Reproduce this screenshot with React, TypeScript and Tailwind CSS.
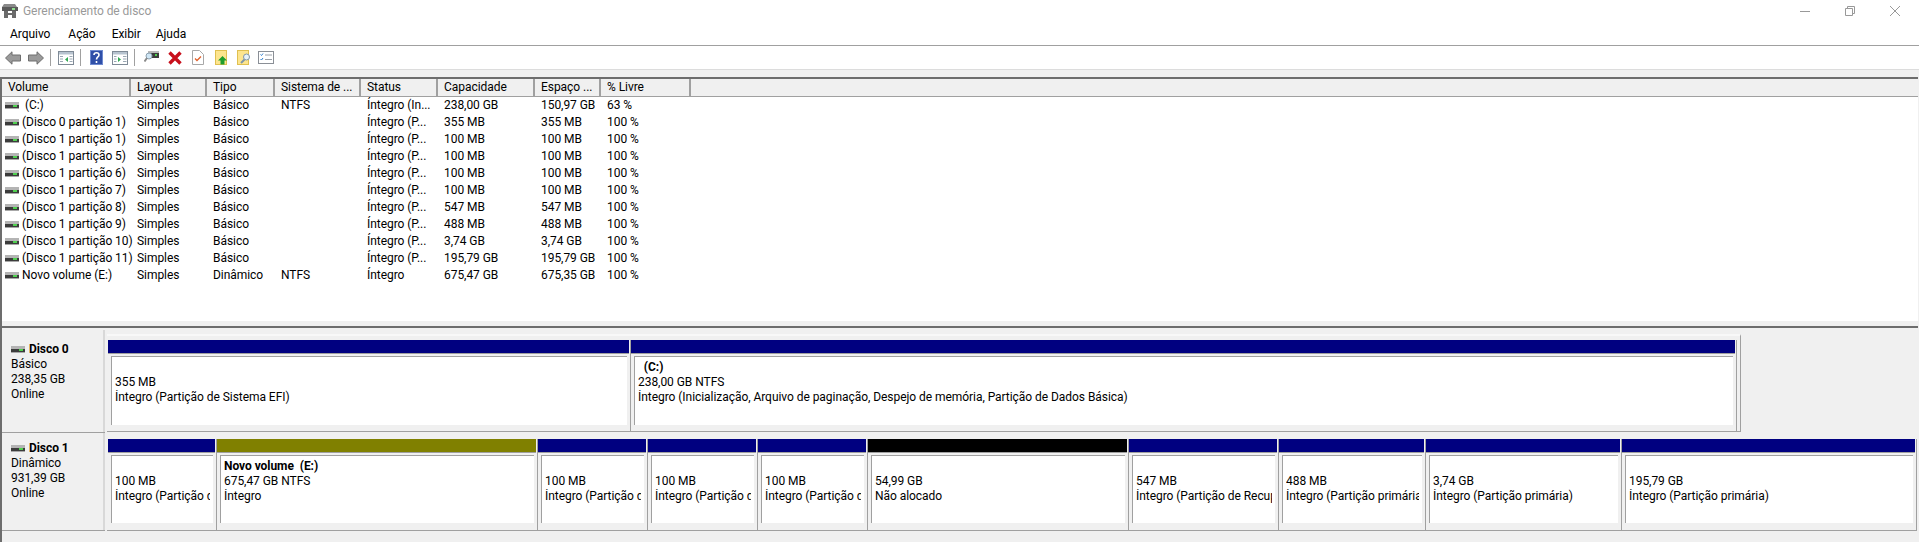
const font = { fontFamily: 'Roboto, "Liberation Sans", sans-serif' };

const columns = [
  { name: 'Volume', w: 'w-[129px]' },
  { name: 'Layout', w: 'w-[76px]' },
  { name: 'Tipo', w: 'w-[68px]' },
  { name: 'Sistema de ...', w: 'w-[86px]' },
  { name: 'Status', w: 'w-[77px]' },
  { name: 'Capacidade', w: 'w-[97px]' },
  { name: 'Espaço ...', w: 'w-[66px]' },
  { name: '% Livre', w: 'w-[90px]' },
];

const rows = [
  [' (C:)', 'Simples', 'Básico', 'NTFS', 'Íntegro (In...', '238,00 GB', '150,97 GB', '63 %'],
  ['(Disco 0 partição 1)', 'Simples', 'Básico', '', 'Íntegro (P...', '355 MB', '355 MB', '100 %'],
  ['(Disco 1 partição 1)', 'Simples', 'Básico', '', 'Íntegro (P...', '100 MB', '100 MB', '100 %'],
  ['(Disco 1 partição 5)', 'Simples', 'Básico', '', 'Íntegro (P...', '100 MB', '100 MB', '100 %'],
  ['(Disco 1 partição 6)', 'Simples', 'Básico', '', 'Íntegro (P...', '100 MB', '100 MB', '100 %'],
  ['(Disco 1 partição 7)', 'Simples', 'Básico', '', 'Íntegro (P...', '100 MB', '100 MB', '100 %'],
  ['(Disco 1 partição 8)', 'Simples', 'Básico', '', 'Íntegro (P...', '547 MB', '547 MB', '100 %'],
  ['(Disco 1 partição 9)', 'Simples', 'Básico', '', 'Íntegro (P...', '488 MB', '488 MB', '100 %'],
  ['(Disco 1 partição 10)', 'Simples', 'Básico', '', 'Íntegro (P...', '3,74 GB', '3,74 GB', '100 %'],
  ['(Disco 1 partição 11)', 'Simples', 'Básico', '', 'Íntegro (P...', '195,79 GB', '195,79 GB', '100 %'],
  ['Novo volume (E:)', 'Simples', 'Dinâmico', 'NTFS', 'Íntegro', '675,47 GB', '675,35 GB', '100 %'],
];

const disk0 = [
  { w: 'w-[523px]', bar: 'bg-[#000080]', size: '355 MB', status: 'Íntegro (Partição de Sistema EFI)' },
  { w: 'w-[1106px]', bar: 'bg-[#000080]', name: '  (C:)', size: '238,00 GB NTFS', status: 'Íntegro (Inicialização, Arquivo de paginação, Despejo de memória, Partição de Dados Básica)' },
];

const disk1 = [
  { w: 'w-[109px]', bar: 'bg-[#000080]', size: '100 MB', status: 'Íntegro (Partição de Recuperação)' },
  { w: 'w-[321px]', bar: 'bg-[#808000]', name: 'Novo volume  (E:)', size: '675,47 GB NTFS', status: 'Íntegro' },
  { w: 'w-[110px]', bar: 'bg-[#000080]', size: '100 MB', status: 'Íntegro (Partição de Recuperação)' },
  { w: 'w-[110px]', bar: 'bg-[#000080]', size: '100 MB', status: 'Íntegro (Partição de Recuperação)' },
  { w: 'w-[110px]', bar: 'bg-[#000080]', size: '100 MB', status: 'Íntegro (Partição de Recuperação)' },
  { w: 'w-[261px]', bar: 'bg-black', size: '54,99 GB', status: 'Não alocado' },
  { w: 'w-[150px]', bar: 'bg-[#000080]', size: '547 MB', status: 'Íntegro (Partição de Recuperação)' },
  { w: 'w-[147px]', bar: 'bg-[#000080]', size: '488 MB', status: 'Íntegro (Partição primária)' },
  { w: 'w-[196px]', bar: 'bg-[#000080]', size: '3,74 GB', status: 'Íntegro (Partição primária)' },
  { w: 'w-[295px]', bar: 'bg-[#000080]', size: '195,79 GB', status: 'Íntegro (Partição primária)' },
];

function DiskIcon() {
  return (
    <svg width="14" height="7" viewBox="0 0 14 7" className="shrink-0">
      <rect x="0" y="0" width="14" height="3" fill="#b4b4b4" />
      <rect x="0" y="3" width="14" height="3" fill="#3c3c3c" />
      <rect x="8" y="3" width="4" height="2" fill="#4fd04f" />
      <rect x="0" y="6" width="14" height="1" fill="#a8a8a8" />
    </svg>
  );
}

function AppIcon() {
  return (
    <svg width="16" height="14" viewBox="0 0 16 14" className="shrink-0">
      <path d="M2 0h11l2 3v4H0V3z" fill="#8a8a8a" />
      <rect x="0" y="3" width="16" height="4" fill="#5a5a5a" />
      <rect x="10" y="4" width="3" height="2" fill="#8fe08f" />
      <rect x="2" y="7" width="4" height="7" fill="#6b6b6b" />
      <rect x="10" y="7" width="4" height="7" fill="#6b6b6b" />
      <rect x="6" y="9" width="4" height="2" fill="#6b6b6b" />
    </svg>
  );
}

function Arrow({ flip }: { flip?: boolean }) {
  return (
    <svg width="16" height="14" viewBox="0 0 16 14" className={flip ? '-scale-x-100' : ''}>
      <path d="M0.500 7 7 0.800V4h8.500v6H7v3.200z" fill="#9a9a9a" stroke="#6e6e6e" />
    </svg>
  );
}

function PanelIcon({ left }: { left?: boolean }) {
  return (
    <svg width="16" height="14" viewBox="0 0 16 14">
      <rect x="0.500" y="0.500" width="15" height="13" fill="#fff" stroke="#7f8a96" />
      <rect x="1" y="1" width="14" height="2.500" fill="#b7c3cf" />
      {left ? (
        <>
          <path d="M10 6v5L7 8.500z" fill="#2fa84f" />
          <path d="M2 5.500h3M2 8h3M2 10.500h3M11.500 5.500h3M11.500 8h3M11.500 10.500h3" stroke="#9aa7b3" />
        </>
      ) : (
        <>
          <path d="M6 6v5l3-2.500z" fill="#2fa84f" />
          <path d="M2 5.500h2.500M2 8h2.500M2 10.500h2.500M11 5.500h3.500M11 8h3.500M11 10.500h3.500" stroke="#9aa7b3" />
        </>
      )}
    </svg>
  );
}

function Sep() {
  return <div className="w-px h-[17px] bg-[#a0a0a0]" />;
}

function Toolbar() {
  return (
    <div className="h-[23px] box-content border-t border-[#a0a0a0] bg-white flex items-center pl-[5px]">
      <Arrow />
      <div className="w-[7px]" />
      <Arrow flip />
      <div className="w-[6px]" />
      <Sep />
      <div className="w-[7px]" />
      <PanelIcon left />
      <div className="w-[6px]" />
      <Sep />
      <div className="w-[9px]" />
      <svg width="13" height="15" viewBox="0 0 13 15">
        <rect width="13" height="15" fill="#2f4fa8" />
        <rect x="0.500" y="0.500" width="12" height="14" fill="none" stroke="#6f8ad0" />
        <path d="M4 5c0-3 5-3 5 0 0 2-2.500 2-2.500 4.500M6.500 11v2" stroke="#fff" strokeWidth="1.600" fill="none" />
      </svg>
      <div className="w-[9px]" />
      <PanelIcon />
      <div className="w-[6px]" />
      <Sep />
      <div className="w-[9px]" />
      <svg width="15" height="15" viewBox="0 0 15 15">
        <rect x="4" y="2" width="11" height="6" fill="#3c3c3c" />
        <rect x="4" y="1" width="11" height="2" fill="#b8b8b8" />
        <rect x="11" y="4" width="2" height="2" fill="#4fd04f" />
        <circle cx="5" cy="6" r="3" fill="#cfe6f5" stroke="#8aa0b0" />
        <path d="M3 8 0.500 11.500" stroke="#8a8a8a" strokeWidth="2" />
      </svg>
      <div className="w-[9px]" />
      <svg width="14" height="14" viewBox="0 0 14 14">
        <path d="M1.500 1.500 12.500 12.500M12.500 1.500 1.500 12.500" stroke="#c8101c" strokeWidth="3.400" />
      </svg>
      <div className="w-[10px]" />
      <svg width="12" height="15" viewBox="0 0 12 15">
        <path d="M0.500 0.500h7l4 4v10h-11z" fill="#fff" stroke="#a8a8a8" />
        <path d="M3 8.500 5 10.500 9 6.500" stroke="#e0602a" strokeWidth="1.300" fill="none" />
      </svg>
      <div className="w-[11px]" />
      <svg width="12" height="15" viewBox="0 0 12 15">
        <rect x="0.500" y="0.500" width="11" height="14" fill="#fde58e" stroke="#e0c050" />
        <path d="M5.500 14.500v-4H3L7.500 6 12 10.500H9.500v4z" fill="#1f9e2c" />
      </svg>
      <div className="w-[10px]" />
      <svg width="14" height="15" viewBox="0 0 14 15">
        <rect x="0.500" y="0.500" width="11" height="14" fill="#fde58e" stroke="#e0c050" />
        <circle cx="9.500" cy="7" r="3" fill="#e8f2f8" stroke="#7f96a8" />
        <path d="M7.500 9.500 4 13" stroke="#7f96a8" strokeWidth="2" />
      </svg>
      <div className="w-[7px]" />
      <svg width="16" height="13" viewBox="0 0 16 13">
        <rect x="0.500" y="0.500" width="15" height="12" fill="#fff" stroke="#8a8f96" />
        <path d="M2.500 3.500 3.500 4.500 5 2.500M2.500 8 3.500 9 5 7" stroke="#2f7fd0" fill="none" />
        <path d="M7 4h7M7 8.500h7" stroke="#9aa0a8" />
      </svg>
    </div>
  );
}

function Partition({ p, height }: { p: (typeof disk1)[number]; height: string }) {
  return (
    <div className={`${p.w} shrink-0 flex flex-col border-r border-[#a0a0a0] pr-[1px]`}>
      <div className={`h-[13px] ${p.bar}`} />
      <div className={`${height} border-t border-[#a0a0a0] pt-[2px] pl-[3px] pr-[2px] pb-[3px]`}>
        <div className="h-full border-l border-t border-[#a0a0a0] bg-white pt-[3px] pl-[3px] pr-[3px] leading-[15px] whitespace-pre overflow-hidden">
          {p.name ? <div className="font-bold">{p.name}</div> : <div className="h-[15px]" />}
          <div className="overflow-hidden">{p.size}</div>
          <div className="overflow-hidden">{p.status}</div>
        </div>
      </div>
    </div>
  );
}

function DiskLabel({ name, kind, size, top }: { name: string; kind: string; size: string; top: string }) {
  return (
    <div className={`w-[103px] shrink-0 border-r-2 border-[#d8d8d8] pl-[9px] ${top} leading-[15px]`}>
      <div className="flex items-center gap-[4px] font-bold">
        <DiskIcon />
        {name}
      </div>
      <div>{kind}</div>
      <div>{size}</div>
      <div>Online</div>
    </div>
  );
}

export default function App() {
  return (
    <div className="w-[1919px] h-[542px] overflow-hidden bg-[#f0f0f0] text-[12px] tracking-[-0.05px] text-black" style={font}>
      {/* barra de titulo */}
      <div className="h-[22px] bg-white flex items-center">
        <div className="pl-[2px] pr-[5px]">
          <AppIcon />
        </div>
        <span className="text-[#999999]">Gerenciamento de disco</span>
        <div className="ml-auto flex items-center pr-[19px] gap-[35px]">
          <svg width="10" height="10" viewBox="0 0 10 10">
            <path d="M0 5.500h10" stroke="#999" />
          </svg>
          <svg width="10" height="10" viewBox="0 0 10 10">
            <path d="M0.500 2.500h7v7h-7zM2.500 2.500v-2h7v7h-2" fill="none" stroke="#999" />
          </svg>
          <svg width="10" height="10" viewBox="0 0 10 10">
            <path d="M0 0l10 10M10 0 0 10" stroke="#999" />
          </svg>
        </div>
      </div>
      {/* menu */}
      <div className="h-[23px] bg-white flex items-center pl-[10px]">
        <span>Arquivo</span>
        <span className="ml-[18px]">Ação</span>
        <span className="ml-[16px]">Exibir</span>
        <span className="ml-[15px]">Ajuda</span>
      </div>
      <Toolbar />
      <div className="h-[8px] border-t border-[#dcdcdc] bg-[#f0f0f0]" />
      {/* area principal */}
      <div className="h-[466px] w-[1918px] border-l-2 border-t-2 border-[#6d6d6d] flex flex-col">
        <div className="h-[242px] bg-white flex flex-col">
          <div className="h-[18px] flex bg-[#f0f0f0] border-b border-[#a0a0a0]">
            {columns.map((c) => (
              <div key={c.name} className={`${c.w} pl-[6px] shrink-0 border-r-2 border-[#a0a0a0] leading-[17px] whitespace-nowrap`}>
                {c.name}
              </div>
            ))}
          </div>
          {rows.map((r) => (
            <div key={r[0]} className="h-[17px] flex items-center leading-[17px]">
              {r.map((v, i) =>
                i === 0 ? (
                  <div key={i} className="w-[129px] shrink-0 pl-[3px] whitespace-pre flex items-center gap-[3px]">
                    <DiskIcon />
                    <span>{v}</span>
                  </div>
                ) : (
                  <div key={i} className={`${columns[i].w} shrink-0 pl-[6px] whitespace-pre overflow-hidden`}>
                    {v}
                  </div>
                )
              )}
            </div>
          ))}
        </div>
        {/* divisor */}
        <div className="h-[7px] bg-[#f0f0f0] border-b-2 border-[#6d6d6d]" />
        {/* discos */}
        <div className="flex-1 flex flex-col pt-[2px]">
          <div className="h-[103px] flex border-b border-[#a0a0a0] w-[103px] overflow-visible">
            <DiskLabel name="Disco 0" kind="Básico" size="238,35 GB" top="pt-[12px]" />
            <div className="ml-[2px] mt-[4px] shrink-0 w-[1634px] h-[98px] flex pl-[1px] pt-[4px] pr-[4px] border-r border-b border-[#a0a0a0] border-t-2 border-t-[#f8f8f8]">
              {disk0.map((p) => (
                <Partition key={p.size} p={p} height="h-[75px]" />
              ))}
            </div>
          </div>
          <div className="h-[98px] flex border-b border-[#a0a0a0] w-[103px] overflow-visible">
            <DiskLabel name="Disco 1" kind="Dinâmico" size="931,39 GB" top="pt-[8px]" />
            <div className="ml-[2px] shrink-0 w-[1810px] h-[98px] flex pl-[1px] pt-[6px] border-b border-[#a0a0a0]">
              {disk1.map((p, i) => (
                <Partition key={i} p={p} height="h-[74px]" />
              ))}
            </div>
          </div>
        </div>
      </div>
    </div>
  );
}
